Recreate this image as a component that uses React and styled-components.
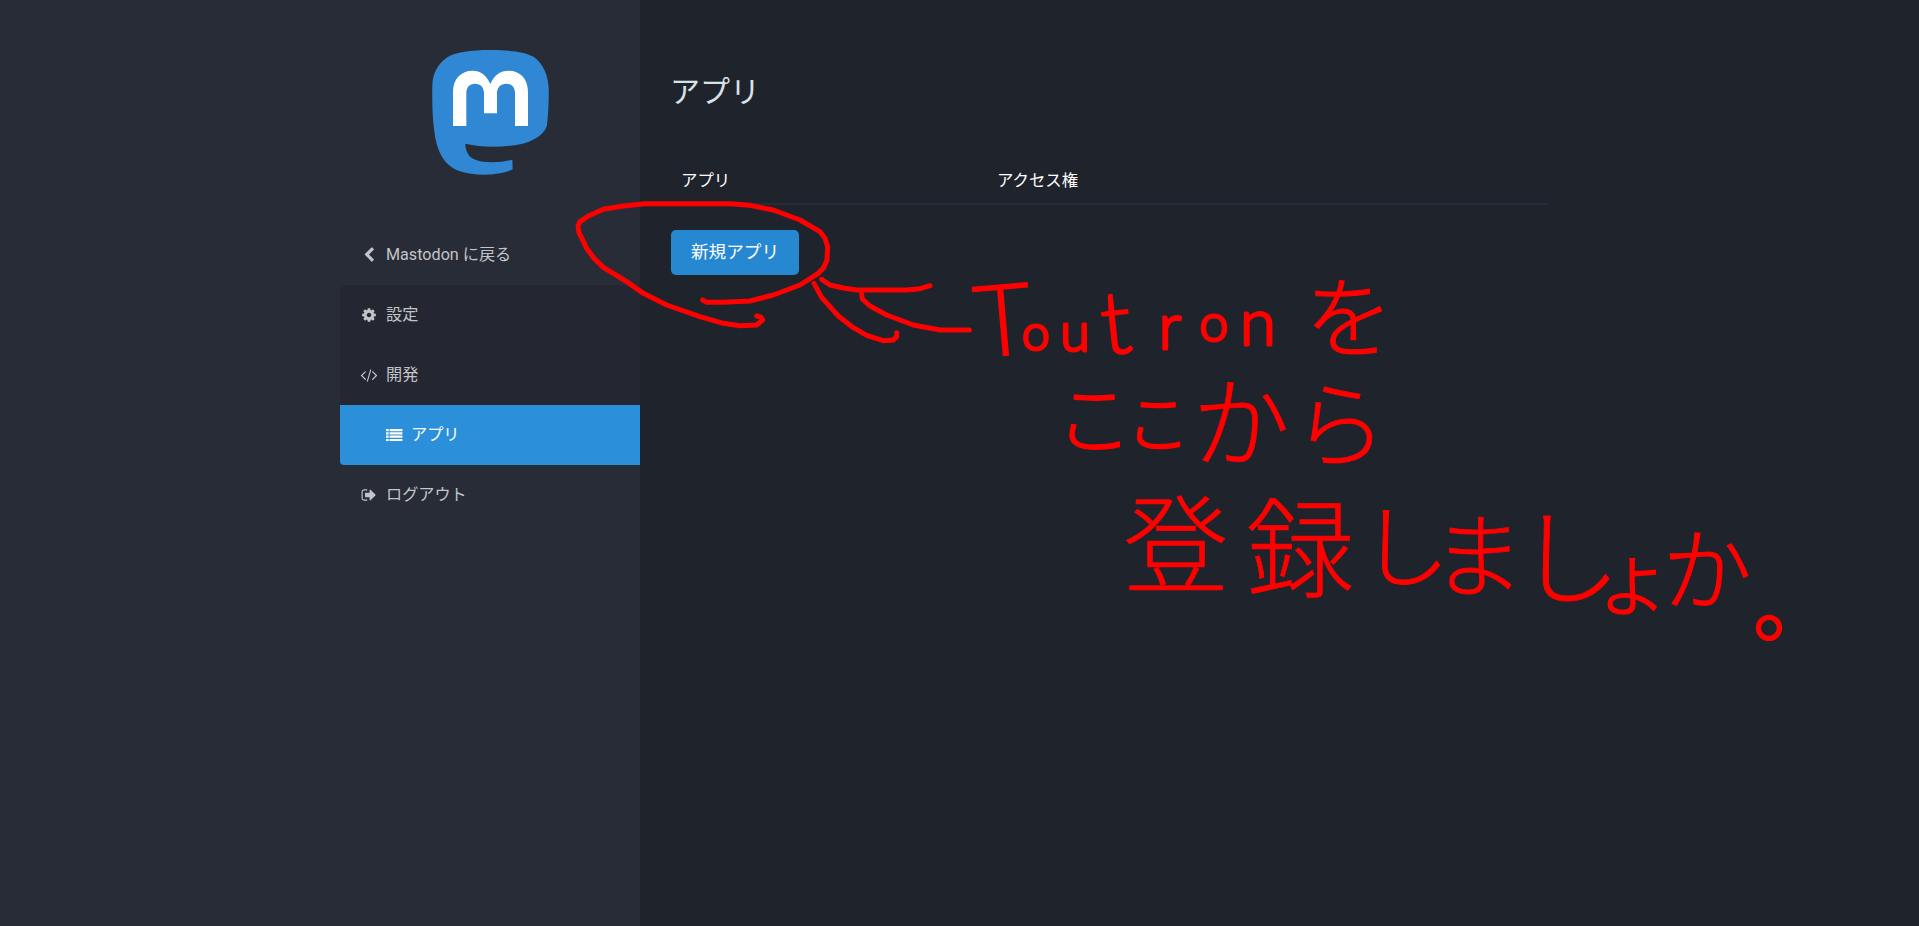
import React from "react";
import styled, { createGlobalStyle } from "styled-components";

const GlobalStyle = createGlobalStyle`
  *, *::before, *::after { box-sizing: border-box; }
  body {
    margin: 0;
    background: #1f232b;
    font-family: Roboto, "Noto Sans CJK JP", sans-serif;
    font-size: 16px;
    color: #fff;
    overflow: hidden;
  }
`;

const Page = styled.div`
  position: relative;
  display: flex;
  height: 926px;
`;

const SidebarWrapper = styled.aside`
  flex: 0 0 640px;
  display: flex;
  justify-content: flex-end;
  background: #282c37;
`;

const Sidebar = styled.div`
  width: 300px;
`;

const LogoLink = styled.a`
  display: flex;
  justify-content: center;
  padding: 30px 0 35px;

  svg {
    display: block;
    width: 160px;
    height: 160px;
  }
`;

const Nav = styled.nav`
  display: flex;
  flex-direction: column;
`;

const NavItem = styled.a`
  display: flex;
  align-items: center;
  gap: 9px;
  height: 60px;
  padding-left: ${(p) => (p.$nested ? 46 : 21)}px;
  color: ${(p) => (p.$active ? "#fff" : "#c3c4c7")};
  background: ${(p) => (p.$active ? "#2b90d9" : p.$group ? "#242731" : "transparent")};
  border-radius: ${(p) => (p.$active ? "0 0 0 4px" : p.$group ? "4px 0 0 0" : "0")};
  font-size: 16.15px;
  line-height: 20px;

  svg {
    width: 16px;
    height: 16px;
    fill: currentColor;
    flex: none;
    overflow: visible;
  }
`;

const Content = styled.main`
  flex: 0 0 908px;
  padding: 71px 0 0 31px;
`;

const Title = styled.h2`
  margin: 0 0 63px -1px;
  font-size: 30px;
  line-height: 42px;
  font-weight: 400;
  color: #d9e1e8;
`;

const TableHead = styled.div`
  display: grid;
  grid-template-columns: 316px 1fr;
  height: 29px;
  border-bottom: 2px solid #282c37;
  font-size: 16.4px;
`;

const HeadCell = styled.div`
  padding-left: 10px;
  line-height: 10px;
`;

const Button = styled.a`
  display: inline-flex;
  justify-content: center;
  width: 128px;
  height: 45px;
  margin-top: 25px;
  padding-top: 10px;
  border-radius: 5px;
  background: #2588d0;
  font-size: 17.6px;
  line-height: 24px;
`;

const Annotation = styled.svg`
  position: absolute;
  left: 0;
  top: 0;
  width: 1919px;
  height: 926px;
  pointer-events: none;
`;

const Ink = styled.g`
  fill: none;
  stroke: #f00;
  stroke-width: 15;
  stroke-linecap: round;
  stroke-linejoin: round;
`;

const Note = styled.text`
  fill: #f00;
  stroke: #f00;
  stroke-linejoin: round;
  font-family: Lato, "Noto Sans CJK JP", sans-serif;
  font-weight: 300;
  text-anchor: middle;
`;

const icons = {
  back: "M1427 301l-531 531 531 531q19 19 19 45t-19 45l-166 166q-19 19-45 19t-45-19l-742-742q-19-19-19-45t19-45l742-742q19-19 45-19t45 19l166 166q19 19 19 45t-19 45z",
  cog: "M1152 896q0-106-75-181t-181-75-181 75-75 181 75 181 181 75 181-75 75-181zm512-109v222q0 12-8 23t-20 13l-185 28q-19 54-39 91 35 50 107 138 10 12 10 25t-9 23q-27 37-99 108t-94 71q-12 0-26-9l-138-108q-44 23-91 38-16 136-29 186-7 28-36 28h-222q-14 0-24.5-8.5t-11.5-21.5l-28-184q-49-16-90-37l-141 107q-10 9-25 9-14 0-25-11-126-114-165-168-7-10-7-23 0-12 8-23 15-21 51-66.5t54-70.5q-27-50-41-99l-183-27q-13-2-21-12.5t-8-23.5v-222q0-12 8-23t19-13l186-28q14-46 39-92-40-57-107-138-10-12-10-24 0-10 9-23 26-36 98.5-107.5t94.5-71.5q13 0 26 10l138 107q44-23 91-38 16-136 29-186 7-28 36-28h222q14 0 24.5 8.5t11.5 21.5l28 184q49 16 90 37l142-107q9-9 24-9 13 0 25 10 129 119 165 170 7 8 7 22 0 12-8 23-15 21-51 66.5t-54 70.5q26 50 41 98l183 28q13 2 21 12.5t8 23.5z",
  code: "M553 1399l-50 50q-10 10-23 10t-23-10l-466-466q-10-10-10-23t10-23l466-466q10-10 23-10t23 10l50 50q10 10 10 23t-10 23l-393 393 393 393q10 10 10 23t-10 23zm591-1067l-373 1291q-4 13-15.5 19.5t-23.5 2.5l-62-17q-13-4-19.5-15.5t-2.5-24.5l373-1291q4-13 15.5-19.5t23.5-2.5l62 17q13 4 19.5 15.5t2.5 24.5zm657 651l-466 466q-10 10-23 10t-23-10l-50-50q-10-10-10-23t10-23l393-393-393-393q-10-10-10-23t10-23l50-50q10-10 23-10t23 10l466 466q10 10 10 23t-10 23z",
  list: "M0 220h300v250H0zM400 220h1440v250H400zM0 590h300v250H0zM400 590h1440v250H400zM0 960h300v250H0zM400 960h1440v250H400zM0 1330h300v250H0zM400 1330h1440v250H400z",
  signOut: "M704 1440q0 4 1 20t.5 26.5-3 23.5-10 19.5-20.5 6.5h-320q-119 0-203.5-84.5t-84.5-203.5v-704q0-119 84.5-203.5t203.5-84.5h320q13 0 22.5 9.5t9.5 22.5q0 4 1 20t.5 26.5-3 23.5-10 19.5-20.5 6.5h-320q-66 0-113 47t-47 113v704q0 66 47 113t113 47h312l11.5 1 11.5 3 8 5.5 7 9 2 13.5zm928-544q0 26-19 45l-544 544q-19 19-45 19t-45-19-19-45v-288h-448q-26 0-45-19t-19-45v-384q0-26 19-45t45-19h448v-288q0-26 19-45t45-19 45 19l544 544q19 19 19 45z",
};

const Icon = ({ name }) => (
  <svg viewBox="0 0 1792 1792" aria-hidden="true">
    <path d={icons[name]} />
  </svg>
);

const Logo = () => (
  <svg viewBox="0 0 480 480" role="img" aria-label="Mastodon">
    <path
      fill="#3088d4"
      d="M242 60C300 60 345 66 368 79C400 100 414 135 416 175C417 215 414 260 411 285C405 315 365 335 335 342C270 354 215 352 166 341C166 365 178 383 196 389C225 400 275 398 307 389L308 418C270 437 195 440 145 422C100 405 82 360 75 318C67 270 66 215 67 165C68 130 85 100 112 82C135 66 185 60 242 60Z"
    />
    <path
      fill="#fff"
      d="M129 288V186C129 145 155 122 187 122C212 122 228 134 241 162C254 134 270 122 297 122C329 122 354 145 354 186V288H315V190C315 172 305 161 289 161C272 161 261 172 261 190V250H222V190C222 172 212 161 195 161C178 161 169 172 169 190V288Z"
    />
  </svg>
);

const menu = [
  { icon: "back", label: "Mastodon に戻る" },
  { icon: "cog", label: "設定", group: true },
  { icon: "code", label: "開発", group: true },
  { icon: "list", label: "アプリ", nested: true, active: true },
  { icon: "signOut", label: "ログアウト" },
];

const strokes = [
  "428,330 440,337 490,337 570,333 640,315 720,285 775,250 791,233 801,210 803,170 795,145 780,125 720,90 640,60 570,46 510,41 255,41 190,48 130,58 85,78 60,95 54,108 57,128 80,175 103,206 130,232 200,275 250,310 320,345 420,380 490,400 540,407 590,405 608,390 602,381 590,378",
  "785,268 810,285 850,294 890,300 1040,300 1080,296 1110,287",
  "762,280 785,322 835,378 880,413 920,436 970,452 1000,450 1010,440 1010,428",
  "905,312 907,327 930,348 980,375 1060,405 1140,420 1228,420",
];

// Each character: [glyph, centre x, baseline y, size, extra thickness, tilt]
const notes = [
  [
    ["T", 1006, 358, 100, 1.2, -5],
    ["o", 1036, 350, 50, 3, 0],
    ["u", 1075, 351, 54, 3, 0],
    ["t", 1119, 355, 88, 2, -6],
    ["r", 1170, 349, 66, 2.8, 0],
    ["o", 1214, 341, 52, 3, 0],
    ["n", 1258, 345, 66, 2.8, 0],
    ["を", 1349, 350, 88, 1.2, 0],
  ],
  [
    ["こ", 1094, 448, 76, 1.8, 0],
    ["こ", 1158, 447, 64, 2.2, 0],
    ["か", 1241, 459, 98, 0.8, 0],
    ["ら", 1340, 460, 94, 0.8, 0],
  ],
  [
    ["登", 1176, 584, 106, 0.6, 0],
    ["録", 1300, 589, 108, 0.6, 0],
    ["し", 1405, 580, 90, 1, 0],
    ["ま", 1478, 590, 92, 0.8, 0],
    ["し", 1569, 597, 104, 0.8, 0],
    ["ょ", 1633, 609, 82, 1.4, 0],
    ["か", 1707, 603, 90, 1, 0],
    ["。", 1794, 635, 82, 2.2, 0],
  ],
];

export default function App() {
  return (
    <>
      <GlobalStyle />
      <Page>
        <SidebarWrapper>
          <Sidebar>
            <LogoLink>
              <Logo />
            </LogoLink>
            <Nav>
              {menu.map((m, i) => (
                <NavItem key={i} $group={m.group} $nested={m.nested} $active={m.active}>
                  <Icon name={m.icon} />
                  <span>{m.label}</span>
                </NavItem>
              ))}
            </Nav>
          </Sidebar>
        </SidebarWrapper>
        <Content>
          <Title>アプリ</Title>
          <TableHead>
            <HeadCell>アプリ</HeadCell>
            <HeadCell>アクセス権</HeadCell>
          </TableHead>
          <Button>新規アプリ</Button>
        </Content>
        <Annotation viewBox="0 0 1919 926">
          <Ink transform="translate(560 190) scale(0.33333)">
            {strokes.map((points, i) => (
              <polyline key={i} points={points} />
            ))}
          </Ink>
          {notes.map((line, i) => (
            <Note key={i}>
              {line.map(([char, x, y, size, weight, tilt], j) => (
                <tspan key={j} x={x} y={y} rotate={tilt} fontSize={size} strokeWidth={weight}>
                  {char}
                </tspan>
              ))}
            </Note>
          ))}
        </Annotation>
      </Page>
    </>
  );
}
